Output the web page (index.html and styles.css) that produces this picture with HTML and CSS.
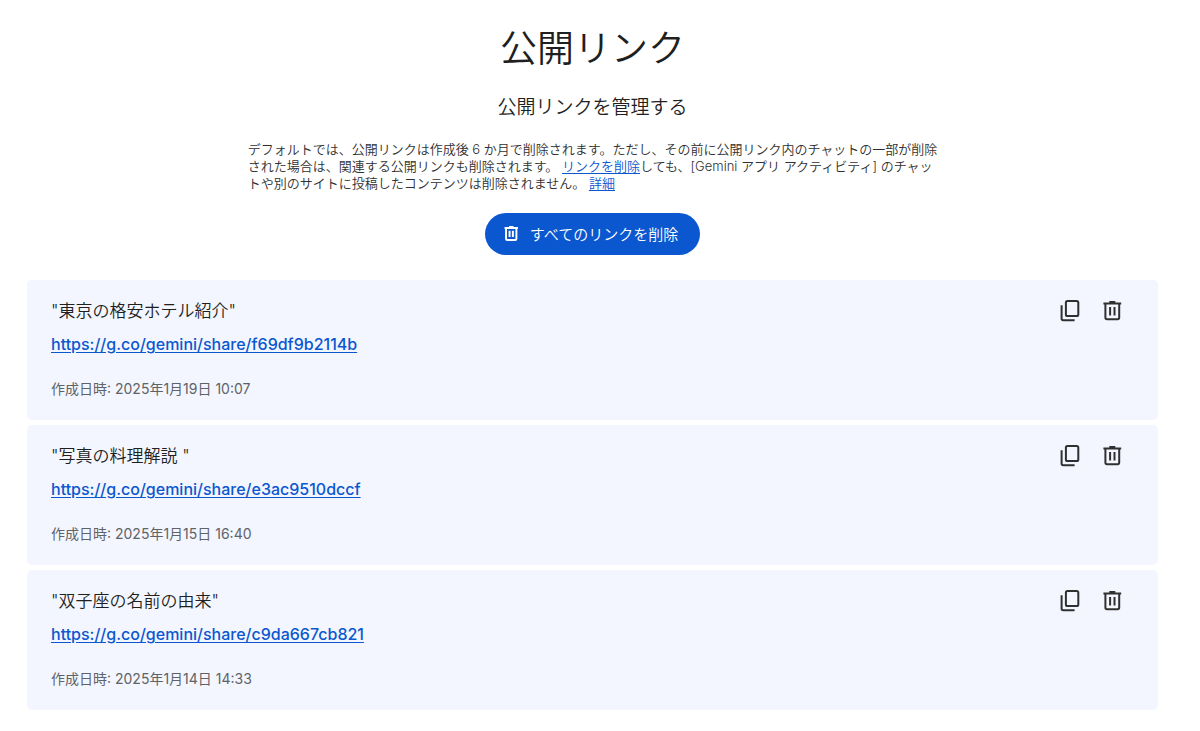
FILE: index.html
```html
<!DOCTYPE html>
<html lang="ja">
<head>
<meta charset="utf-8">
<meta name="viewport" content="width=device-width, initial-scale=1">
<title>公開リンク</title>
<link rel="stylesheet" href="styles.css">
</head>

<body>
<svg class="sprite" aria-hidden="true">
	<symbol id="icon-copy" viewBox="0 0 24 24">
		<rect x="7.9" y="2.9" width="12.4" height="15.2" rx="1.6" />
		<path d="M3.6 7.2v13.4c0 1 .6 1.6 1.6 1.6h11.4" />
	</symbol>
	<symbol id="icon-trash" viewBox="0 0 24 24">
		<path d="M3.4 5.4h17.8M9.3 4h6M5.4 5.8v13.8c0 1 .6 1.6 1.6 1.6h10.6c1 0 1.6-.6 1.6-1.6V5.8M10.1 9v8.4M14.5 9v8.4" />
	</symbol>
</svg>

<main class="page">
	<header class="intro">
		<h1 class="title">公開リンク</h1>
		<h2 class="subtitle">公開リンクを管理する</h2>
		<p class="note">デフォルトでは、公開リンクは作成後 6 か月で削除されます。ただし、その前に公開リンク内のチャットの一部が削除<br>された場合は、関連する公開リンクも削除されます。 <a href="#">リンクを削除</a>しても、[Gemini アプリ アクティビティ] のチャッ<br>トや別のサイトに投稿したコンテンツは削除されません。 <a href="#">詳細</a></p>
		<button class="delete-all" type="button"><svg class="icon"><use href="#icon-trash" /></svg>すべてのリンクを削除</button>
	</header>

	<ul class="links">
		<li class="card">
			<div class="info">
				<h3 class="name">"東京の格安ホテル紹介"</h3>
				<a class="url" href="https://g.co/gemini/share/f69df9b2114b">https://g.co/gemini/share/f69df9b2114b</a>
				<p class="date">作成日時: 2025年1月19日 10:07</p>
			</div>
			<div class="actions">
				<button type="button" aria-label="リンクをコピー"><svg class="icon"><use href="#icon-copy" /></svg></button>
				<button type="button" aria-label="リンクを削除"><svg class="icon"><use href="#icon-trash" /></svg></button>
			</div>
		</li>
		<li class="card">
			<div class="info">
				<h3 class="name">"写真の料理解説 "</h3>
				<a class="url" href="https://g.co/gemini/share/e3ac9510dccf">https://g.co/gemini/share/e3ac9510dccf</a>
				<p class="date">作成日時: 2025年1月15日 16:40</p>
			</div>
			<div class="actions">
				<button type="button" aria-label="リンクをコピー"><svg class="icon"><use href="#icon-copy" /></svg></button>
				<button type="button" aria-label="リンクを削除"><svg class="icon"><use href="#icon-trash" /></svg></button>
			</div>
		</li>
		<li class="card">
			<div class="info">
				<h3 class="name">"双子座の名前の由来"</h3>
				<a class="url" href="https://g.co/gemini/share/c9da667cb821">https://g.co/gemini/share/c9da667cb821</a>
				<p class="date">作成日時: 2025年1月14日 14:33</p>
			</div>
			<div class="actions">
				<button type="button" aria-label="リンクをコピー"><svg class="icon"><use href="#icon-copy" /></svg></button>
				<button type="button" aria-label="リンクを削除"><svg class="icon"><use href="#icon-trash" /></svg></button>
			</div>
		</li>
	</ul>
</main>
</body>
</html>
```

FILE: styles.css
```css
* {margin:0; padding:0; box-sizing:border-box; }
li{list-style:none; }
button{border:0; background:none; font:inherit; color:inherit; cursor:pointer; }
h1,h2,h3{font-weight:350; }

body{background:#fff; color:#1f1f1f; font-family:"Inter", "Noto Sans CJK JP", sans-serif; }
a{color:#0b57d0; text-underline-offset:2px; }
.sprite{position:absolute; width:0; height:0; }
.icon{display:block; width:24px; height:24px; fill:none; stroke:currentColor; stroke-width:2; }

.page{padding:23px 42px 22px 27px; }

.intro{display:flex; flex-direction:column; align-items:center; }
.title{font-size:37px; line-height:52px; }
.subtitle{margin-top:19px; font-size:19px; line-height:28px; }
.note{margin-top:19px; font-size:13px; font-weight:350; line-height:17px; white-space:nowrap; color:#303030; }
.delete-all{display:flex; align-items:center; gap:10px; height:42px; margin:21px 0 25px; padding:0 22px 2px 17px; border-radius:21px; background:#0b57d0; color:#fff; font-size:15px; font-weight:350; }
.delete-all .icon{width:18px; height:18px; stroke-width:2.6; }

.links{display:flex; flex-direction:column; gap:5px; }
.card{display:flex; justify-content:space-between; padding:18px 34px 20px 24px; border-radius:5px; background:#f3f6fe; }
.name{font-size:17px; line-height:26px; white-space:pre; }
.url{display:block; margin-top:7px; font-size:16px; font-weight:500; line-height:26px; }
.date{margin-top:21px; font-size:14px; line-height:22px; color:#5f6368; }
.actions{display:flex; align-items:flex-start; gap:18px; color:#303030; }
```
